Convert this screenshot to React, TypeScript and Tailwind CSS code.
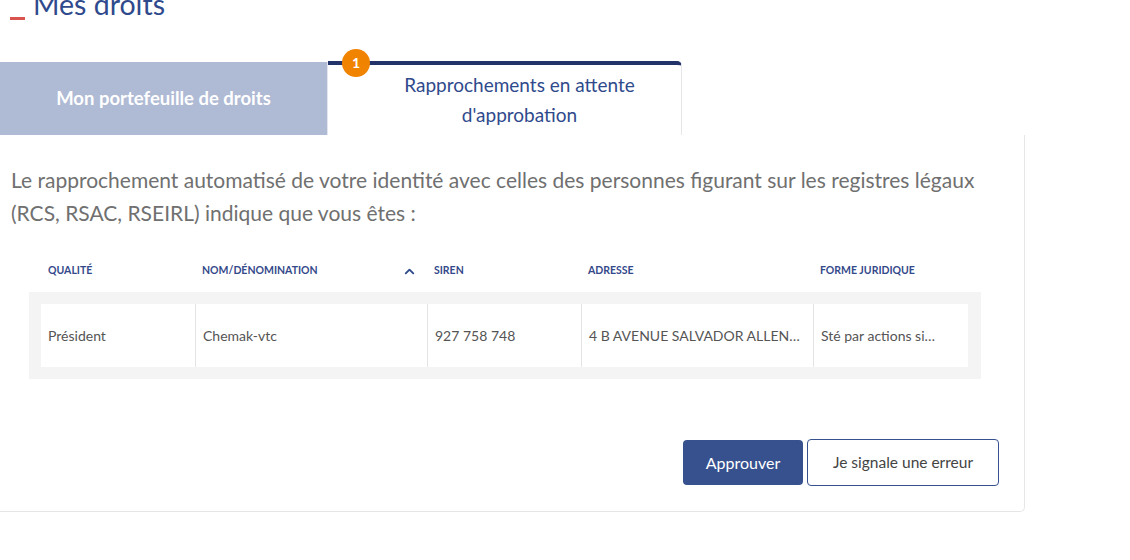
import { ChevronUp } from "lucide-react";

const columns = ["Qualité", "Nom/Dénomination", "Siren", "Adresse", "Forme juridique"];

const row = ["Président", "Chemak-vtc", "927 758 748", "4 B AVENUE SALVADOR ALLEN…", "Sté par actions si…"];

const App = () => {
  return (
    <div className="w-[1130px] h-[560px] overflow-hidden bg-white font-['Lato',sans-serif]">
      <h1 className="-mt-[14px] ml-[10px] flex items-end gap-[8px] text-[28.5px] leading-[36px] text-[#2f4a8c]">
        <span className="mb-[2px] block h-[3px] w-[15px] bg-[#d9534f]" />
        Mes droits
      </h1>

      <div className="mt-[39px] flex items-end">
        <div className="flex h-[73px] w-[328px] items-center justify-center border-r border-[#e3e6ee] bg-[#afbad4] text-[18.5px] font-bold text-white">
          Mon portefeuille de droits
        </div>
        <div className="relative flex h-[74px] w-[354px] items-center justify-center rounded-tr-[5px] border-t-4 border-r border-t-[#22336a] border-r-[#e6e6e6] bg-white pl-[30px] text-center text-[19px] leading-[30px] text-[#2f4a8c]">
          <span className="absolute -top-[16px] left-[14px] flex h-[28px] w-[28px] items-center justify-center rounded-full bg-[#f08300] text-[14px] font-bold text-white">
            1
          </span>
          <span>
            Rapprochements en attente
            <br />
            d'approbation
          </span>
        </div>
      </div>

      <div className="w-[1025px] rounded-br-[5px] border-r border-b border-[#e6e6e6] pb-[25px]">
        <p className="pl-[11px] pt-[28px] text-[21px] leading-[33px] whitespace-nowrap text-[#707070]">
          Le rapprochement automatisé de votre identité avec celles des personnes figurant sur les registres légaux
          <br />
          (RCS, RSAC, RSEIRL) indique que vous êtes :
        </p>

        <div className="ml-[29px] w-[952px]">
          <div className="mt-[30px] grid h-[24px] grid-cols-[154px_232px_154px_232px_155px] px-[12px] text-[10.5px] font-bold uppercase text-[#34498a]">
            {columns.map((c, i) => (
              <div key={c} className="flex items-center justify-between pl-[7px] pr-[10px]">
                <span>{c}</span>
                {i === 1 && <ChevronUp size={15} strokeWidth={3} className="text-[#2f4a8c]" />}
              </div>
            ))}
          </div>

          <div className="mt-[9px] bg-[#f4f4f4] p-[12px] pr-[13px]">
            <div className="grid h-[63px] grid-cols-[154px_232px_154px_232px_155px] bg-white text-[14px] text-[#555]">
              {row.map((v, i) => (
                <div
                  key={i}
                  className={`flex items-center whitespace-nowrap pl-[7px] ${i > 0 ? "border-l border-[#e4e4e4]" : ""}`}
                >
                  {v}
                </div>
              ))}
            </div>
          </div>
        </div>

        <div className="mt-[60px] flex items-center justify-end gap-[4px] pr-[25px]">
          <button className="h-[45px] w-[120px] rounded-[4px] bg-[#37508e] text-[16px] text-white">
            Approuver
          </button>
          <button className="h-[47px] w-[192px] rounded-[4px] border border-[#37508e] bg-white text-[15.5px] text-[#444]">
            Je signale une erreur
          </button>
        </div>
      </div>
    </div>
  );
};

export default App;
